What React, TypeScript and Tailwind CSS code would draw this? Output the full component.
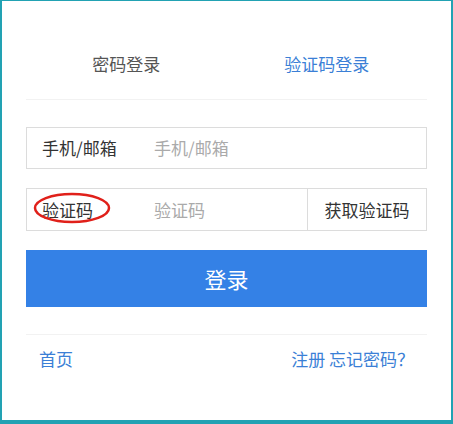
import React from "react";

const font = { fontFamily: '"Noto Sans CJK SC", "Noto Sans", sans-serif' };

export default function App() {
  return (
    <div
      className="w-[453px] h-[424px] bg-white border-[#22a2b3] border-t-[1px] border-l-[2px] border-r-[2px] border-b-[4px] box-border"
      style={font}
    >
      <div className="px-[24px] pt-[28px]">
        <div className="grid grid-cols-2 h-[71px] items-center border-b border-[#f2f2f2] text-[17px]">
          <div className="text-center text-[#555]">密码登录</div>
          <div className="text-center text-[#3b7fd6]">验证码登录</div>
        </div>

        <div className="mt-[27px] h-[42px] border border-[#dcdcdc] flex items-center text-[17px]">
          <div className="w-[111px] pl-[15px] text-[#333]">手机/邮箱</div>
          <div className="pl-[16px] text-[#aaa]">手机/邮箱</div>
        </div>

        <div className="mt-[19px] h-[43px] border border-[#dcdcdc] flex items-center text-[17px]">
          <div className="relative w-[111px] pl-[15px] text-[#333]">
            验证码
            <svg
              className="absolute left-[5px] top-[-6px]"
              width="80"
              height="34"
              viewBox="0 0 80 34"
            >
              <ellipse cx="40" cy="17" rx="37" ry="14" fill="none" stroke="#e0201a" strokeWidth="2.5" />
            </svg>
          </div>
          <div className="pl-[16px] text-[#aaa] flex-1">验证码</div>
          <div className="h-full w-[119px] border-l border-[#dcdcdc] flex items-center justify-center text-[#333]">
            获取验证码
          </div>
        </div>

        <button className="mt-[19px] w-full h-[57px] bg-[#3481e6] text-white text-[22px] flex items-center justify-center">
          登录
        </button>

        <div className="mt-[27px] border-t border-[#f2f2f2]" />

        <div className="flex justify-between items-center h-[48px] px-[13px] text-[17px] text-[#3b7fd6]">
          <span>首页</span>
          <span>注册 忘记密码？</span>
        </div>
      </div>
    </div>
  );
}
